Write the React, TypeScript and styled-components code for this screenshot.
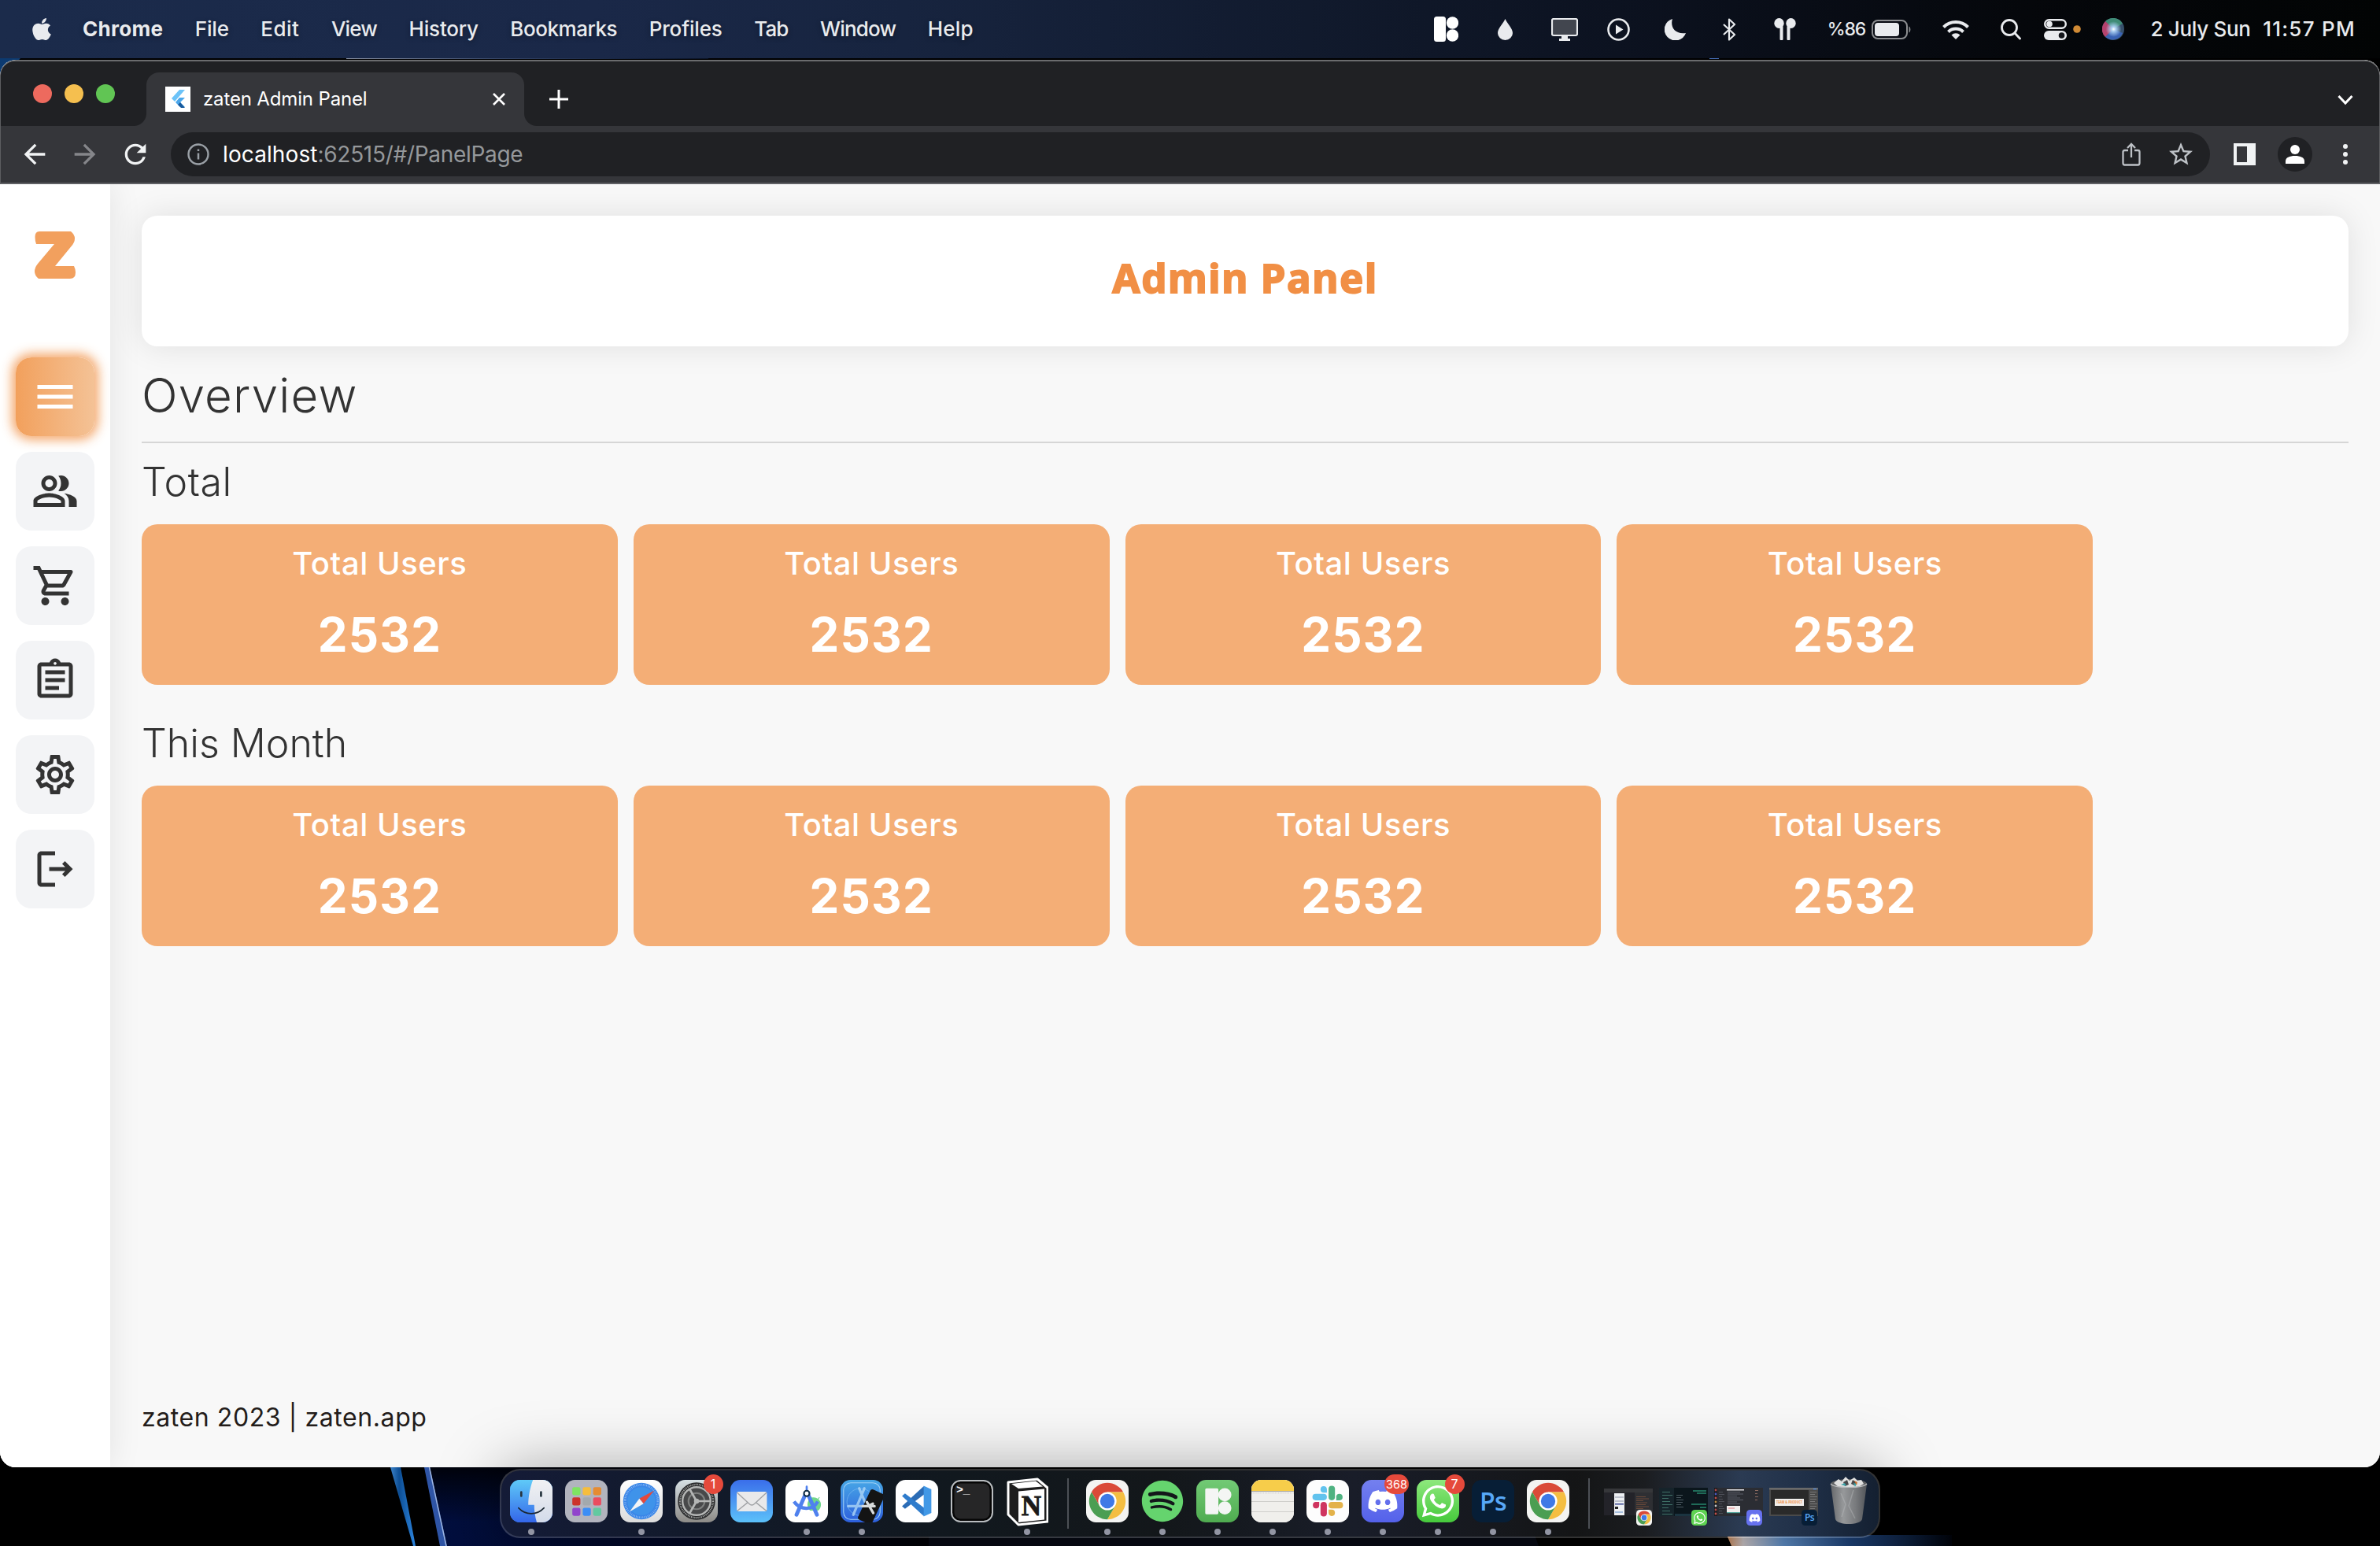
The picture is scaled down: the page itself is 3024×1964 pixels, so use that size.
import React from "react";
import styled, { createGlobalStyle, css } from "styled-components";
import { FaApple, FaDiscord, FaSpotify, FaWhatsapp } from "react-icons/fa";
import { MdArrowBack, MdArrowForward, MdMenu, MdOutlineAssignment, MdOutlinePeopleAlt, MdOutlineSettings, MdOutlineShoppingCart, MdRefresh, MdStarBorder } from "react-icons/md";

const GlobalStyle = createGlobalStyle`
  *, *::before, *::after { box-sizing: border-box; }
  html, body { margin: 0; padding: 0; background: #000; }
  body { font-family: Inter, "Liberation Sans", sans-serif; }
  svg { display: block; flex: none; }
`;

/* ---------- desktop ---------- */
const Desktop = styled.div`
  position: relative;
  width: 3024px;
  height: 1964px;
  overflow: hidden;
  background: #000;
  display: flex;
  flex-direction: column;
`;
const WallpaperLayer = styled.svg`
  position: absolute;
  inset: 0;
`;

/* ---------- menu bar ---------- */
const MenuBar = styled.header`
  position: relative;
  height: 74px;
  flex: none;
  display: flex;
  align-items: center;
  justify-content: space-between;
  padding: 0 32px 0 37px;
  color: #e9ebee;
  background: linear-gradient(90deg, #1b2b4b 0%, #1a2848 25%, #17243f 38%, #111a2d 55%, #0c1220 68%, #05070b 85%, #020404 100%);
`;
const MenuGroup = styled.nav`
  display: flex;
  align-items: center;
  gap: 40.5px;
`;
const MenuItem = styled.span<{ $bold?: boolean; $track?: number }>`
  font-size: 26px;
  line-height: 32px;
  padding-bottom: 1px;
  margin-left: ${(p) => (p.$bold ? -4.5 : 0)}px;
  font-weight: ${(p) => (p.$bold ? 700 : 450)};
  letter-spacing: ${(p) => p.$track ?? 0}px;
  white-space: pre;
  text-shadow: 0 2px 6px rgba(0, 0, 0, 0.35);
`;
const StatusGroup = styled.div`
  display: flex;
  align-items: center;
`;
const StatusItem = styled.span<{ $w: number; $before: number }>`
  display: flex;
  justify-content: center;
  width: ${(p) => p.$w}px;
  margin-left: ${(p) => p.$before}px;
`;
const StatusText = styled.span<{ $size: number; $track: number }>`
  font-size: ${(p) => p.$size}px;
  line-height: 32px;
  font-weight: 450;
  letter-spacing: ${(p) => p.$track}px;
  white-space: pre;
  padding-bottom: 1px;
`;

/* ---------- browser window ---------- */
const BrowserWindow = styled.main`
  position: relative;
  margin-top: 2px;
  height: 1788px;
  flex: none;
  border-radius: 20px;
  overflow: hidden;
  display: flex;
  flex-direction: column;
  background: #f8f8f8;
`;
const BrowserChrome = styled.div`
  height: 158px;
  flex: none;
  border: 1px solid #5c5d60;
  border-top: 2px solid #6b6c6e;
  border-bottom: 2px solid #5f6064;
  border-radius: 20px 20px 0 0;
  background: #35363a;
  display: flex;
  flex-direction: column;
`;
const TabStrip = styled.div`
  height: 82px;
  flex: none;
  display: flex;
  align-items: flex-end;
  background: #202124;
  border-radius: 18px 18px 0 0;
  padding-right: 33px;
`;
const TrafficLights = styled.div`
  display: flex;
  gap: 16px;
  margin-left: 41px;
  padding-bottom: 29px;
`;
const TrafficLight = styled.span<{ $color: string }>`
  width: 24px;
  height: 24px;
  border-radius: 50%;
  background: ${(p) => p.$color};
`;
const Tab = styled.div`
  position: relative;
  display: flex;
  align-items: center;
  width: 480px;
  height: 68px;
  margin-left: 40px;
  padding: 0 23px 0 24px;
  border-radius: 16px 16px 0 0;
  background: #35363a;
  &::before,
  &::after {
    content: "";
    position: absolute;
    bottom: 0;
    width: 16px;
    height: 16px;
  }
  &::before {
    left: -16px;
    background: radial-gradient(circle at 0 0, transparent 15.5px, #35363a 16.5px);
  }
  &::after {
    right: -16px;
    background: radial-gradient(circle at 100% 0, transparent 15.5px, #35363a 16.5px);
  }
`;
const TabTitle = styled.span`
  flex: 1;
  margin-left: 16px;
  font-size: 24px;
  line-height: 30px;
  padding-bottom: 1px;
  letter-spacing: -0.15px;
  color: #fff;
  white-space: nowrap;
`;
const NewTab = styled.span`
  margin-left: 32px;
  padding-bottom: 22px;
`;
const TabSearch = styled.span`
  margin-left: auto;
  padding-bottom: 26px;
`;
const Toolbar = styled.div`
  flex: 1;
  display: flex;
  align-items: center;
  padding-right: 39px;
  color: #f1f3f4;
`;
const NavButton = styled.span<{ $dim?: boolean; $before: number }>`
  display: flex;
  margin-left: ${(p) => p.$before}px;
  color: ${(p) => (p.$dim ? "#85868a" : "#f1f3f4")};
`;
const Omnibox = styled.div`
  flex: 1;
  height: 56px;
  margin-left: 25px;
  padding: 0 19px 0 21px;
  border-radius: 28px;
  background: #202124;
  display: flex;
  align-items: center;
  color: #bdc1c6;
`;
const Url = styled.span`
  flex: 1;
  margin-left: 17px;
  font-size: 28px;
  line-height: 36px;
  letter-spacing: -0.3px;
  color: #95989b;
  white-space: nowrap;
`;
const UrlHost = styled.span`
  letter-spacing: 0.1px;
  color: #fff;
`;
const Avatar = styled.span`
  width: 44px;
  height: 44px;
  margin-left: 28px;
  border-radius: 50%;
  background: #202124;
  display: flex;
  align-items: center;
  justify-content: center;
`;

/* ---------- admin page ---------- */
const Page = styled.div`
  flex: 1;
  display: flex;
  background: #f8f8f8;
  overflow: hidden;
`;
const Sidebar = styled.aside`
  width: 140px;
  flex: none;
  display: flex;
  flex-direction: column;
  align-items: center;
  gap: 20px;
  padding-top: 60px;
  background: #fff;
  box-shadow: 0 0 40px rgba(0, 0, 0, 0.09);
`;
const BrandMark = styled.div`
  height: 60px;
  margin-bottom: 80px;
`;
const SideButton = styled.button<{ $active?: boolean }>`
  width: 100px;
  height: 100px;
  flex: none;
  padding: 0;
  border: 0;
  border-radius: 20px;
  display: flex;
  align-items: center;
  justify-content: center;
  font-size: 60px;
  color: #333;
  background: #f3f4f6;
  ${(p) =>
    p.$active &&
    css`
      color: #fff;
      background: linear-gradient(90deg, #f2a05c, #f4c296);
      box-shadow: 0 0 14px 5px rgba(243, 160, 94, 0.9);
    `}
`;
const Content = styled.section`
  flex: 1;
  display: flex;
  flex-direction: column;
  padding: 40px 40px 43px;
`;
const TitleCard = styled.div`
  height: 166px;
  flex: none;
  display: flex;
  align-items: center;
  justify-content: center;
  padding-bottom: 10px;
  border-radius: 20px;
  background: #fff;
  box-shadow: 0 0 40px rgba(0, 0, 0, 0.1);
`;
const Title = styled.h1`
  margin: 0;
  font-family: "Noto Sans", "Open Sans", sans-serif;
  font-size: 51px;
  font-weight: 700;
  line-height: 72px;
  letter-spacing: 1.6px;
  color: #f18f45;
  -webkit-text-stroke: 1.8px #f18f45;
`;
const Heading = styled.h2`
  margin: 20px 0 17px;
  font-size: 60px;
  font-weight: 300;
  line-height: 84px;
  letter-spacing: 1.2px;
  font-optical-sizing: none;
  color: #333;
`;
const Rule = styled.hr`
  width: 100%;
  height: 2px;
  flex: none;
  margin: 0 0 19px;
  border: 0;
  background: #d6d6d6;
`;
const SubHeading = styled.h3<{ $track?: number }>`
  margin: 0 0 24px;
  font-size: 50px;
  font-weight: 300;
  line-height: 60px;
  letter-spacing: ${(p) => p.$track ?? 0}px;
  font-optical-sizing: none;
  color: #333;
`;
const CardGrid = styled.div`
  display: grid;
  grid-template-columns: repeat(4, 604.8px);
  gap: 20px;
  margin-bottom: 44px;
`;
const StatCard = styled.article`
  height: 204px;
  padding-top: 20px;
  display: flex;
  flex-direction: column;
  align-items: center;
  gap: 20px;
  border-radius: 20px;
  background: #f4ae76;
  color: #fff;
`;
const StatLabel = styled.span`
  font-size: 40px;
  font-weight: 500;
  line-height: 60px;
  letter-spacing: 0.55px;
  font-optical-sizing: none;
`;
const StatValue = styled.span`
  font-size: 60px;
  font-weight: 700;
  line-height: 80px;
  letter-spacing: 1.2px;
  font-optical-sizing: none;
`;
const Footer = styled.footer`
  margin-top: auto;
  font-size: 32px;
  line-height: 40px;
  letter-spacing: 0.58px;
  font-optical-sizing: none;
  color: #231c1a;
`;

/* ---------- dock ---------- */
const DockArea = styled.div`
  position: relative;
  flex: 1;
  display: flex;
  justify-content: center;
  align-items: flex-start;
  padding-top: 2px;
`;
const Dock = styled.div`
  display: flex;
  height: 88px;
  padding: 0 3px;
  border-radius: 26px;
  border: 2px solid rgba(255, 255, 255, 0.2);
  background: linear-gradient(90deg, #141b37 0%, #121a2a 15%, #11181e 33%, #13171a 48%, #191d29 62%, #141516 78%, #1b1d20 83%, #2b3b53 90%, #1f2f47 95%, #142031 100%);
  background-clip: padding-box;
  background-color: #14181f;
  box-shadow: 0 0 80px rgba(0, 0, 0, 0.35);
`;
const DockCell = styled.div`
  position: relative;
  width: 70px;
  padding-top: 12px;
  display: flex;
  flex-direction: column;
  align-items: center;
`;
const RunningDot = styled.span`
  width: 8px;
  height: 8px;
  margin-top: 8px;
  border-radius: 50%;
  background: #9295a3;
`;
const AppBadge = styled.span<{ $wide?: boolean }>`
  position: absolute;
  top: 5px;
  right: ${(p) => (p.$wide ? 2 : 1.5)}px;
  width: ${(p) => (p.$wide ? 31 : 25)}px;
  height: 25px;
  border-radius: 13px;
  background: #e5493b;
  color: #fff;
  font-size: ${(p) => (p.$wide ? 14.5 : 16)}px;
  line-height: 25px;
  text-align: center;
`;
const AppTile = styled.span<{ $bg: string; $size?: number; $color?: string }>`
  width: ${(p) => p.$size ?? 54}px;
  height: ${(p) => p.$size ?? 54}px;
  border-radius: ${(p) => (p.$size ?? 54) * 0.23}px;
  background: ${(p) => p.$bg};
  color: ${(p) => p.$color ?? "#fff"};
  overflow: hidden;
  display: flex;
  align-items: center;
  justify-content: center;
  flex: none;
`;
const PsText = styled.span<{ $size: number }>`
  font-family: "Open Sans", sans-serif;
  font-weight: 600;
  font-size: ${(p) => p.$size}px;
  line-height: 1;
  letter-spacing: -0.5px;
  color: #57a8f8;
`;
const PromptText = styled.span`
  align-self: flex-start;
  margin-right: auto;
  padding: 3px 0 0 5px;
  font: 700 15px/17px "Liberation Mono", monospace;
  letter-spacing: -0.5px;
  color: #f2f2f2;
`;
const TerminalTile = styled(AppTile)`
  border: 2.5px solid #b9bdc0;
  box-shadow: inset 0 0 0 2.5px #050505;
`;
const DockDivider = styled.span`
  width: 2px;
  height: 64px;
  margin: 10px 14px 0 16px;
  background: #4c5055;
`;
const MiniWindow = styled.div`
  position: relative;
  margin-top: 10px;
  width: 62px;
  height: 36px;
`;
const MiniBadge = styled.span`
  position: absolute;
  right: 1px;
  bottom: -12px;
`;

/* ---------- icons ---------- */
const rainbow = ["#7fe561", "#f6bd3c", "#e58c33", "#cc332a", "#a2a9ad", "#ea4c5f", "#9144cc", "#3c8ef5", "#62c9a0"];

const FinderIcon = () => (
  <svg width="54" height="54" viewBox="0 0 100 100">
    <defs>
      <linearGradient id="finderBlue" x1="0" y1="0" x2="0" y2="1"><stop offset="0" stopColor="#5fcaf8" /><stop offset="1" stopColor="#3466ea" /></linearGradient>
      <linearGradient id="finderWhite" x1="0" y1="0" x2="0" y2="1"><stop offset="0" stopColor="#f1f1f3" /><stop offset="1" stopColor="#d3dbea" /></linearGradient>
    </defs>
    <rect width="100" height="100" fill="url(#finderBlue)" />
    <path d="M54 0C47 18 43 40 43 59h14c0 14 2 28 6 41h37V0z" fill="url(#finderWhite)" />
    <path d="M26.500 29v9M73 29v9" stroke="#26343f" strokeWidth="5" strokeLinecap="round" />
    <path d="M20 66c17 18 43 18 60 0" fill="none" stroke="#1b2733" strokeWidth="3" strokeLinecap="round" />
  </svg>
);
const LaunchpadIcon = () => (
  <svg width="54" height="54" viewBox="0 0 100 100">
    {rainbow.map((c, i) => <rect key={c} x={17 + (i % 3) * 24.500} y={17 + Math.floor(i / 3) * 24.300} width="19" height="19" rx="4" fill={c} />)}
  </svg>
);
const SafariIcon = () => (
  <svg width="54" height="54" viewBox="0 0 100 100">
    <circle cx="50" cy="50" r="43" fill="#3a86e8" />
    <circle cx="50" cy="50" r="38.500" fill="none" stroke="#b5d4f7" strokeWidth="5" strokeDasharray="1 3" />
    <circle cx="50" cy="50" r="33" fill="#3f93ea" />
    <path d="M80 25 45 44l10 12z" fill="#e5493c" />
    <path d="M22 75 45 44l10 12z" fill="#f3f4f5" />
  </svg>
);
const SettingsIcon = () => (
  <svg width="54" height="54" viewBox="0 0 100 100">
    <circle cx="50" cy="50" r="44" fill="#2b2c2d" />
    <circle cx="50" cy="50" r="39" fill="none" stroke="#a7a9a8" strokeWidth="4" strokeDasharray="2 2" />
    <circle cx="50" cy="50" r="33" fill="#48494a" stroke="#b4b6b5" strokeWidth="4.500" />
    <circle cx="50" cy="50" r="19" fill="none" stroke="#7e807f" strokeWidth="4" />
    <path d="M50 50h32M50 50 34 22M50 50 34 78" stroke="#b4b6b5" strokeWidth="5" />
    <circle cx="50" cy="50" r="6" fill="#b4b6b5" />
  </svg>
);
const MailIcon = () => (
  <svg width="54" height="54" viewBox="0 0 100 100">
    <rect x="15" y="28" width="71" height="46" rx="4" fill="#e9e9ea" />
    <path d="M16 30l28 26c4 4 9 4 13 0l28-26M16 73l25-20M85 73 60 53" fill="none" stroke="#a0a2a5" strokeWidth="2.500" />
  </svg>
);
const AndroidStudioIcon = () => (
  <svg width="54" height="54" viewBox="0 0 100 100">
    <path d="M58 72a19 19 0 0 1 0-28c10-7 22 0 25 10 2 8-2 15-6 18z" fill="#70d68c" />
    <path d="M63 45l-3-5M76 46l4-5" stroke="#70d68c" strokeWidth="2" />
    <path d="M50 16v14" stroke="#4f81ee" strokeWidth="5" strokeLinecap="round" />
    <path d="M46 36 26 82M54 36l20 46" stroke="#4f81ee" strokeWidth="9" strokeLinecap="round" />
    <path d="M20 51c14 20 44 22 56 0" fill="none" stroke="#4f81ee" strokeWidth="8" />
    <circle cx="50" cy="32" r="6.500" fill="#fff" stroke="#12304a" strokeWidth="4" />
  </svg>
);
const SimulatorIcon = () => (
  <svg width="54" height="54" viewBox="0 0 100 100">
    <rect x="7" y="7" width="86" height="86" rx="17" fill="none" stroke="#9fd0f5" strokeWidth="2" />
    <circle cx="47" cy="52" r="32" fill="none" stroke="#6fb4ef" strokeWidth="1.500" />
    <path d="M56 20 30 82M44 20l26 62M18 62h60" fill="none" stroke="#b5dbf8" strokeWidth="6" strokeLinecap="round" opacity=".75" />
    <g transform="rotate(25 73 64)"><rect x="54" y="25" width="36" height="78" rx="5" fill="#141414" /></g>
    <path d="M62 52l15 26M52 62h28M76 56l-8 4" stroke="#d8dadc" strokeWidth="6" strokeLinecap="round" />
  </svg>
);
const CodeIcon = () => (
  <svg width="54" height="54" viewBox="0 0 100 100">
    <path d="M66 15 15 62l7 6 48-36z" fill="#2b6cb5" />
    <path d="M15 38 66 85l4-17-48-36z" fill="#2f7ccc" />
    <path d="M66 14l18 8v56l-18 8z" fill="#4198e6" />
  </svg>
);
const NotionIcon = () => (
  <svg width="54" height="64" viewBox="0 0 54 64">
    <path d="M3 8 40 4l13 11v43l-37 4L3 49z" fill="#1d1d1d" stroke="#fff" strokeWidth="3" strokeLinejoin="round" />
    <path d="M7 10l31-3.500 9 7L16 16z" fill="#fff" />
    <path d="M16 19.500l33-3v39l-33 3.500z" fill="#fff" />
    <text x="32.500" y="50" textAnchor="middle" fontFamily="Liberation Serif, serif" fontWeight="700" fontSize="35" fill="#1a1a1a" stroke="#1a1a1a" strokeWidth=".8">N</text>
  </svg>
);
const ChromeIcon = ({ size }: { size: number }) => (
  <svg width={size} height={size} viewBox="0 0 100 100">
    <path d="M12.800 28.500A43 43 0 0 1 87.200 28.500H50L50 50 31.400 60.750z" fill="#da4a38" />
    <path d="M87.200 28.500A43 43 0 0 1 50 93l18.600-32.250L50 50V28.500z" fill="#f4be42" />
    <path d="M50 93A43 43 0 0 1 12.800 28.500L31.400 60.750 50 50l18.600 10.750z" fill="#4b9e52" />
    <circle cx="50" cy="50" r="21.500" fill="#fff" />
    <circle cx="50" cy="50" r="17" fill="#3f79e6" />
  </svg>
);
const BlocksIcon = () => (
  <svg width="54" height="54" viewBox="0 0 100 100" fill="#f4f5f4">
    <rect x="21" y="20" width="31" height="61" rx="3" />
    <circle cx="67" cy="35" r="15.500" />
    <circle cx="67" cy="66" r="15.500" />
  </svg>
);
const NotesIcon = () => (
  <svg width="54" height="54" viewBox="0 0 100 100">
    <rect width="100" height="100" fill="#f0efec" />
    <rect width="100" height="26" fill="#f7cd4a" />
    <path d="M0 27h100" stroke="#a9a7a0" strokeWidth="2" />
    <path d="M0 31h100" stroke="#b5b4b0" strokeWidth="1.500" strokeDasharray="1.500 2" />
    <path d="M0 51h100M0 75h100" stroke="#cfcecb" strokeWidth="2" />
  </svg>
);
const SlackIcon = () => (
  <svg width="54" height="54" viewBox="0 0 100 100">
    <g fill="#62c3ee"><rect x="14" y="33" width="34" height="15" rx="7.500" /><path d="M48 30h-7.500a7.500 7.500 0 1 1 7.500-8z" /></g>
    <g fill="#4fb281"><rect x="52" y="14" width="15" height="34" rx="7.500" /><path d="M70 48v-7.500a7.500 7.500 0 1 1 8 7.500z" /></g>
    <g fill="#e3b24a"><rect x="52" y="52" width="34" height="15" rx="7.500" /><path d="M52 70h7.500a7.500 7.500 0 1 1-7.500 8z" /></g>
    <g fill="#cf3560"><rect x="33" y="52" width="15" height="34" rx="7.500" /><path d="M30 52v7.500a7.500 7.500 0 1 1-8-7.500z" /></g>
  </svg>
);
const TrashIcon = () => (
  <svg width="48" height="62" viewBox="0 0 48 62">
    <defs><linearGradient id="bin" x1="0" x2="1" y1="0" y2="0"><stop offset="0" stopColor="#66686b" /><stop offset=".35" stopColor="#96989a" /><stop offset=".7" stopColor="#77797c" /><stop offset="1" stopColor="#525559" /></linearGradient></defs>
    <ellipse cx="24" cy="10" rx="23" ry="6" fill="#5d5f62" />
    <path d="M5 9l6-5 4 3 5-6 5 5 6-4 4 4 5-1 3 5-8 5H12z" fill="#dfe0e0" />
    <path d="M17 8l5-3 2 6-5 2zM29 5l5 3-3 4-4-2z" fill="#4a4a4c" />
    <path d="M14 11l5-2 2 4zM30 9l4 1-2 4z" fill="#3ba3a8" />
    <path d="M31 6l4 2-1 4z" fill="#d0722f" />
    <path d="M1 10c5 6 41 6 46 0l-6 45c-3 8-31 8-34 0z" fill="url(#bin)" />
    <path d="M1 10c5 6 41 6 46 0" fill="none" stroke="#b9bbbd" strokeWidth="1.200" />
    <path d="M14 22l6 14-5 16M30 18l-6 20 8 16" fill="none" stroke="#bcbec0" strokeWidth="1.500" opacity=".4" />
  </svg>
);

const LogoutIcon = () => (
  <svg width="60" height="60" viewBox="0 0 24 24" fill="currentColor">
    <path d="M17 8l-1.410 1.410L17.170 11H9v2h8.170l-1.580 1.580L17 16l4-4zM5 5h7V3H5c-1.100 0-2 .9-2 2v14c0 1.100.9 2 2 2h7v-2H5z" />
  </svg>
);
const BrandIcon = () => (
  <svg width="52" height="60" viewBox="0 0 52 60">
    <path d="M6 0H46Q51 4 51 9 51 14 46.500 19L26 44H50Q52 48 52 52 52 60 45 60H5Q0 56 0 51 0 46 4 41L25 16H2Q0.500 12 0.500 7 .5 0 6 0z" fill="#f2a05e" />
  </svg>
);

const FlutterFavicon = () => (
  <svg width="32" height="32" viewBox="0 0 32 32">
    <rect width="32" height="32" fill="#fff" />
    <path d="M18 4h7L12 19l-4-4z" fill="#6cc3f8" />
    <path d="M18 14h7l-6 6 6 6h-6l-6-6z" fill="#4aa6ea" />
    <path d="M16 23l3-3 6 7h-5z" fill="#17599c" />
  </svg>
);

const StatusIcons = () => (
  <StatusGroup>
    <StatusItem $w={31} $before={0}>
      <svg width="31" height="32" viewBox="0 0 31 32" fill="#fff"><rect width="15" height="32" rx="3.500" /><circle cx="23.500" cy="8" r="7.700" /><circle cx="23.500" cy="24" r="7.700" /></svg>
    </StatusItem>
    <StatusItem $w={19} $before={50}>
      <svg width="19" height="27" viewBox="0 0 19 27" fill="currentColor"><path d="M9.500 0C12 6 19 12 19 18a9.500 9 0 0 1-19 0C0 12 7 6 9.500 0z" /></svg>
    </StatusItem>
    <StatusItem $w={34} $before={49}>
      <svg width="34" height="29" viewBox="0 0 34 29"><rect x="1" y="1" width="32" height="21" rx="2" fill="#42464f" stroke="currentColor" strokeWidth="2.200" /><path d="M13 23h8v3h3v3H10v-3h3z" fill="currentColor" /></svg>
    </StatusItem>
    <StatusItem $w={29} $before={37}>
      <svg width="29" height="29" viewBox="0 0 29 29"><circle cx="14.500" cy="14.500" r="13" fill="none" stroke="currentColor" strokeWidth="2.600" /><path d="M11 8.500v12l9.500-6z" fill="currentColor" /></svg>
    </StatusItem>
    <StatusItem $w={27} $before={44}>
      <svg width="27" height="27" viewBox="0 0 27 27" fill="currentColor"><path d="M10 0C7 9 12 20 27 18A14 14 0 1 1 10 0z" /></svg>
    </StatusItem>
    <StatusItem $w={17} $before={47}>
      <svg width="17" height="29" viewBox="0 0 17 29" fill="none" stroke="currentColor" strokeWidth="2.200" strokeLinejoin="round"><path d="M1 8l14 13-7 6.500V1.500L15 8 1 21" /></svg>
    </StatusItem>
    <StatusItem $w={28} $before={48}>
      <svg width="28" height="29" viewBox="0 0 28 29" fill="currentColor"><ellipse cx="6.500" cy="6.500" rx="6.200" ry="6.500" /><ellipse cx="21.500" cy="6.500" rx="6.200" ry="6.500" /><rect x="7.500" y="10" width="4" height="18" rx="1" /><rect x="16.500" y="10" width="4" height="18" rx="1" /></svg>
    </StatusItem>
    <StatusItem $w={48} $before={40}><StatusText $size={23} $track={-1.1}>%86</StatusText></StatusItem>
    <StatusItem $w={50} $before={8}>
      <svg width="50" height="25" viewBox="0 0 50 25"><rect x="1" y="1" width="44" height="23" rx="7" fill="none" stroke="#8b8d90" strokeWidth="2" /><rect x="4" y="4" width="31" height="17" rx="4" fill="currentColor" /><path d="M47.500 8.500c2.500 1 2.500 7 0 8z" fill="#8b8d90" /></svg>
    </StatusItem>
    <StatusItem $w={34} $before={40}>
      <svg width="34" height="25" viewBox="0 0 34 25" fill="none" stroke="currentColor" strokeWidth="4"><path d="M1.500 9.500a22 22 0 0 1 31 0" /><path d="M7.500 15.500a13.500 13.500 0 0 1 19 0" /><path d="M11.500 19.500a7.800 7.800 0 0 1 11 0L17 25z" fill="currentColor" stroke="none" /></svg>
    </StatusItem>
    <StatusItem $w={26} $before={40}>
      <svg width="26" height="27" viewBox="0 0 26 27" fill="none" stroke="currentColor" strokeWidth="2.800" strokeLinecap="round"><circle cx="11" cy="11" r="9.500" /><path d="M18 18l6.500 7" /></svg>
    </StatusItem>
    <StatusItem $w={29} $before={29}>
      <svg width="29" height="27" viewBox="0 0 29 27"><rect x="1.200" y="1.200" width="26.600" height="10.600" rx="5.300" fill="none" stroke="currentColor" strokeWidth="2.400" /><circle cx="7" cy="6.500" r="3.800" fill="currentColor" /><rect y="15" width="29" height="12" rx="6" fill="currentColor" /><circle cx="22.500" cy="21" r="3.800" fill="#14161b" /></svg>
    </StatusItem>
    <StatusItem $w={10} $before={8}>
      <svg width="10" height="10" viewBox="0 0 10 10"><circle cx="5" cy="5" r="4.800" fill="#d08a35" /></svg>
    </StatusItem>
    <StatusItem $w={28} $before={27}>
      <svg width="28" height="28" viewBox="0 0 28 28">
        <defs><radialGradient id="siri"><stop offset="0" stopColor="#fff" /><stop offset=".3" stopColor="#a8cdf0" /><stop offset="1" stopColor="#a8cdf0" stopOpacity="0" /></radialGradient></defs>
        <circle cx="14" cy="14" r="14" fill="#37506b" />
        <path d="M14 14 4 4A14 14 0 0 1 26 7z" fill="#3f8b76" /><path d="M14 14 4 4A14 14 0 0 0 4 24z" fill="#b5436e" /><path d="M14 14 4 24a14 14 0 0 0 22-5z" fill="#3a63b4" />
        <circle cx="14.500" cy="14" r="10" fill="url(#siri)" />
      </svg>
    </StatusItem>
    <StatusItem $w={126} $before={34}><StatusText $size={26} $track={-0.3}>2 July Sun</StatusText></StatusItem>
    <StatusItem $w={116} $before={17}><StatusText $size={26} $track={1.25}>11:57 PM</StatusText></StatusItem>
  </StatusGroup>
);

const menus: [string, number][] = [
  ["File", -0.2], ["Edit", 0.5], ["View", -0.8], ["History", -0.2], ["Bookmarks", -0.45],
  ["Profiles", -0.15], ["Tab", -0.9], ["Window", -0.8], ["Help", 0.15],
];

const Wallpaper = () => (
  <WallpaperLayer width="3024" height="1964" viewBox="0 0 3024 1964">
    <defs>
      <linearGradient id="navy" x1="546" x2="1250" y1="0" y2="0" gradientUnits="userSpaceOnUse"><stop offset="0" stopColor="#020f40" /><stop offset=".3" stopColor="#01092b" /><stop offset="1" stopColor="#000" /></linearGradient>
      <linearGradient id="shade" x1="0" x2="0" y1="1864" y2="1964" gradientUnits="userSpaceOnUse"><stop offset="0" stopColor="#000" stopOpacity=".8" /><stop offset=".7" stopColor="#000" stopOpacity="0" /></linearGradient>
      <linearGradient id="planet" x1="2195" x2="2480" y1="0" y2="0" gradientUnits="userSpaceOnUse"><stop offset="0" stopColor="#c98a5c" /><stop offset=".07" stopColor="#c9c2c4" /><stop offset=".25" stopColor="#5d8cc4" /><stop offset=".55" stopColor="#1c3f73" /><stop offset="1" stopColor="#000208" /></linearGradient>
      <linearGradient id="streak" x1="496" x2="528" y1="0" y2="0" gradientUnits="userSpaceOnUse"><stop offset="0" stopColor="#3c83c9" /><stop offset=".35" stopColor="#0d4e94" /><stop offset="1" stopColor="#2d86e0" /></linearGradient>
      <linearGradient id="horizon" x1="440" x2="900" y1="0" y2="0" gradientUnits="userSpaceOnUse"><stop offset="0" stopColor="#8c93a3" /><stop offset=".4" stopColor="#3a4a6b" /><stop offset="1" stopColor="#1c3a78" stopOpacity=".3" /></linearGradient>
    </defs>
    <path d="M546 1864H1250V1964H568z" fill="url(#navy)" />
    <path d="M546 1864H1250V1964H568z" fill="url(#shade)" />
    <path d="M496 1864h13l19 100h-3z" fill="url(#streak)" />
    <path d="M539 1864h7l22 100h-9z" fill="#2f55a6" />
    <path d="M545.500 1864l21.500 100" stroke="#9db5e2" strokeWidth="1.500" />
    <path d="M1180 1950H1950l5 14H1180z" fill="#060913" />
    <path d="M2194 1950H2480V1964H2200z" fill="url(#planet)" />
    <path d="M0 74h26L0 104z" fill="#0c3a70" />
    <rect x="440" y="74" width="460" height="1" fill="url(#horizon)" />
    <rect x="2172" y="74" width="12" height="1" fill="#4a74c0" />
  </WallpaperLayer>
);

const stats = ["first", "second", "third", "fourth"];
const StatRow = () => (
  <CardGrid>
    {stats.map((s) => (
      <StatCard key={s}>
        <StatLabel>Total Users</StatLabel>
        <StatValue>2532</StatValue>
      </StatCard>
    ))}
  </CardGrid>
);

type DockApp = { name: string; icon: React.ReactNode; running?: boolean; badge?: string };
const Tile = AppTile;
const leftApps: DockApp[] = [
  { name: "finder", running: true, icon: <Tile $bg="#3b8ef0"><FinderIcon /></Tile> },
  { name: "launchpad", icon: <Tile $bg="#b2b4be"><LaunchpadIcon /></Tile> },
  { name: "safari", running: true, icon: <Tile $bg="linear-gradient(#fff, #dcdcdc)"><SafariIcon /></Tile> },
  { name: "settings", badge: "1", icon: <Tile $bg="linear-gradient(#d6e0e4, #8d8b87)"><SettingsIcon /></Tile> },
  { name: "mail", icon: <Tile $bg="linear-gradient(#3a6eea, #5cc1fa)"><MailIcon /></Tile> },
  { name: "studio", running: true, icon: <Tile $bg="#fff"><AndroidStudioIcon /></Tile> },
  { name: "simulator", running: true, icon: <Tile $bg="linear-gradient(#47a7e6, #2d5fdc)"><SimulatorIcon /></Tile> },
  { name: "code", icon: <Tile $bg="#fff"><CodeIcon /></Tile> },
  { name: "terminal", icon: <TerminalTile $bg="#262627"><PromptText>&gt;_</PromptText></TerminalTile> },
];
const rightApps: DockApp[] = [
  { name: "chrome", running: true, icon: <Tile $bg="#f4f4f2"><ChromeIcon size={54} /></Tile> },
  { name: "spotify", running: true, icon: <FaSpotify size={54} color="#65d46e" /> },
  { name: "blocks", running: true, icon: <Tile $bg="linear-gradient(#72ca75, #4fab50)"><BlocksIcon /></Tile> },
  { name: "notes", running: true, icon: <Tile $bg="#f0efec"><NotesIcon /></Tile> },
  { name: "slack", running: true, icon: <Tile $bg="#fdfdfd"><SlackIcon /></Tile> },
  { name: "discord", running: true, badge: "368", icon: <Tile $bg="linear-gradient(#7480ef, #5461ea)"><FaDiscord size={40} /></Tile> },
  { name: "whatsapp", running: true, badge: "7", icon: <Tile $bg="linear-gradient(#8ee87d, #46c93c)"><FaWhatsapp size={46} /></Tile> },
  { name: "photoshop", running: true, icon: <Tile $bg="#071e36"><PsText $size={32}>Ps</PsText></Tile> },
  { name: "chrome-dev", running: true, icon: <Tile $bg="#f4f4f2"><ChromeIcon size={54} /></Tile> },
];

const DockItem = ({ app }: { app: DockApp }) => (
  <DockCell>
    {app.icon}
    {app.running && <RunningDot />}
    {app.badge && <AppBadge $wide={app.badge.length > 1}>{app.badge}</AppBadge>}
  </DockCell>
);
const TallCell = styled(DockCell)`
  padding-top: 7px;
  & > ${RunningDot} { margin-top: 3px; }
`;

const lines = (x: number, y0: number, step: number, n: number, color: string, w: number[]) =>
  Array.from({ length: n }, (_, i) => <rect key={i} x={x} y={y0 + i * step} width={w[i % w.length]} height="1" fill={color} />);

const BrowserMini = () => (
  <svg width="62" height="36" viewBox="0 0 62 36">
    <rect y="1" width="62" height="34" fill="#232329" /><rect y="1" width="62" height="5" fill="#36373a" />
    <rect x="39" y="6" width="23" height="29" fill="#2e2f33" />{lines(41, 11, 2.5, 7, "#6c4a3a", [12, 16, 9, 14])}
    <rect x="13" y="7" width="13" height="28" fill="#eef0f3" /><path d="M14 12h11M14 17h11" stroke="#8c93a8" /><rect x="14" y="20" width="11" height="1.500" fill="#35428f" /><rect x="14" y="24" width="4" height="3" fill="#222" /><path d="M14 31h10" stroke="#5b8cc9" />
  </svg>
);
const ChatMini = () => (
  <svg width="62" height="36" viewBox="0 0 62 36">
    <rect width="62" height="36" fill="#0b161c" /><rect width="19" height="36" fill="#16242b" />{lines(4, 5, 4, 8, "#3f6f66", [10, 13, 8])}
    <rect x="20" y="33" width="42" height="3" fill="#1b3440" />{lines(22, 9, 3, 6, "#4b5960", [8, 6, 9])}
    <rect x="43" y="3" width="17" height="2" fill="#1f6b58" /><rect x="48" y="6" width="12" height="2" fill="#1f6b58" /><rect x="41" y="20" width="19" height="2" fill="#1f6b58" /><rect x="52" y="24" width="8" height="2" fill="#1f6b58" />
  </svg>
);
const ServerMini = () => (
  <svg width="62" height="36" viewBox="0 0 62 36">
    <rect width="62" height="36" fill="#2b2d33" /><rect width="4" height="36" fill="#1a1b1f" />
    {["#b14a4a", "#4a5ac0", "#c0504a", "#b98a42", "#c9c9c9", "#b14a4a", "#c0504a"].map((c, i) => <circle key={i} cx="2" cy={3 + i * 5} r="1.400" fill={c} />)}
    {lines(6, 5, 3, 10, "#4c4f57", [5, 7, 4])}{lines(17, 5, 2.500, 7, "#5a5e69", [16, 20, 12])}
    <rect x="16" y="2" width="22" height="1.500" fill="#e4e4e6" /><rect x="16" y="23" width="17" height="9" fill="#f1efee" /><path d="M18 26h8" stroke="#e07b80" /><rect x="16" y="31" width="17" height="1.200" fill="#4fa39a" />{lines(52, 3, 4, 4, "#8a6a60", [4, 3])}
  </svg>
);
const EditorMini = () => (
  <svg width="62" height="36" viewBox="0 0 62 36">
    <rect width="62" height="36" fill="#4a4a4a" /><rect x="2" y="3" width="48" height="31" fill="#2a2a2a" /><rect width="62" height="2.500" fill="#6a6a6a" />
    {lines(52, 5, 3, 8, "#777", [8, 6, 9])}<rect x="56" y="1" width="4" height="1.200" fill="#4b8dea" />
    <rect x="7" y="14" width="37" height="9" fill="#f1efec" />
    <text x="25.500" y="20.200" textAnchor="middle" fontFamily="Open Sans, sans-serif" fontWeight="800" fontSize="4.600" textLength="33" lengthAdjust="spacingAndGlyphs" fill="#efa36b">TEAM &amp; PRODUCT</text>
  </svg>
);
const minis = [
  { name: "browser", view: <BrowserMini />, badge: <Tile $size={20} $bg="#f4f4f2"><ChromeIcon size={20} /></Tile> },
  { name: "chat", view: <ChatMini />, badge: <Tile $size={20} $bg="#5fd352"><FaWhatsapp size={17} /></Tile> },
  { name: "server", view: <ServerMini />, badge: <Tile $size={20} $bg="#6671ee"><FaDiscord size={15} /></Tile> },
  { name: "editor", view: <EditorMini />, badge: <Tile $size={20} $bg="#071e36"><PsText $size={12}>Ps</PsText></Tile> },
];

export default function App() {
  return (
    <Desktop>
      <GlobalStyle />
      <Wallpaper />
      <MenuBar>
        <MenuGroup>
          <FaApple size={32} />
          <MenuItem $bold $track={0.3}>Chrome</MenuItem>
          {menus.map(([label, track]) => <MenuItem key={label} $track={track}>{label}</MenuItem>)}
        </MenuGroup>
        <StatusIcons />
      </MenuBar>

      <BrowserWindow>
        <BrowserChrome>
          <TabStrip>
            <TrafficLights>
              <TrafficLight $color="#ed6a5e" />
              <TrafficLight $color="#f5bf4f" />
              <TrafficLight $color="#61c554" />
            </TrafficLights>
            <Tab>
              <FlutterFavicon />
              <TabTitle>zaten Admin Panel</TabTitle>
              <svg width="18" height="18" viewBox="0 0 18 18"><path d="M2 2l14 14M16 2 2 16" stroke="#fff" strokeWidth="2.600" /></svg>
            </Tab>
            <NewTab><svg width="24" height="24" viewBox="0 0 24 24"><path d="M12 0v24M0 12h24" stroke="#fff" strokeWidth="3" /></svg></NewTab>
            <TabSearch><svg width="20" height="14" viewBox="0 0 20 14"><path d="M1.500 2l8.500 9 8.500-9" fill="none" stroke="#fff" strokeWidth="3" /></svg></TabSearch>
          </TabStrip>
          <Toolbar>
            <NavButton $before={23}><MdArrowBack size={40} /></NavButton>
            <NavButton $before={24} $dim><MdArrowForward size={40} /></NavButton>
            <NavButton $before={24}><MdRefresh size={40} /></NavButton>
            <Omnibox>
              <svg width="28" height="28" viewBox="0 0 28 28"><circle cx="14" cy="14" r="12.500" fill="none" stroke="#9aa0a6" strokeWidth="2.400" /><path d="M14 12.500v8M14 7.500v2.600" stroke="#9aa0a6" strokeWidth="2.500" /></svg>
              <Url><UrlHost>localhost</UrlHost>:62515/#/PanelPage</Url>
              <svg width="24" height="30" viewBox="0 0 24 30" fill="none" stroke="#bdc1c6" strokeWidth="2.300"><path d="M8 10H3.500Q1.500 10 1.500 12V26q0 2.500 2 2.500h17q2 0 2-2.500V12q0-2-2-2H16M12 19V2M7 7l5-5 5 5" /></svg>
              <NavButton $before={33}><MdStarBorder size={36} color="#bdc1c6" /></NavButton>
            </Omnibox>
            <NavButton $before={30}>
              <svg width="28" height="28" viewBox="0 0 28 28"><path d="M0 0h28v28H0z" fill="#f1f3f4" /><path d="M4 4h13v20H4z" fill="#35363a" /></svg>
            </NavButton>
            <Avatar><svg width="24" height="24" viewBox="0 0 24 24" fill="#fff"><circle cx="12" cy="6" r="6" /><path d="M0 24v-3c0-5 5-7 12-7s12 2 12 7v3z" /></svg></Avatar>
            <NavButton $before={38}><svg width="8" height="28" viewBox="0 0 8 28" fill="#f1f3f4"><circle cx="4" cy="4" r="3" /><circle cx="4" cy="14" r="3" /><circle cx="4" cy="24" r="3" /></svg></NavButton>
          </Toolbar>
        </BrowserChrome>

        <Page>
          <Sidebar>
            <BrandMark><BrandIcon /></BrandMark>
            <SideButton $active><MdMenu /></SideButton>
            <SideButton><MdOutlinePeopleAlt /></SideButton>
            <SideButton><MdOutlineShoppingCart /></SideButton>
            <SideButton><MdOutlineAssignment /></SideButton>
            <SideButton><MdOutlineSettings /></SideButton>
            <SideButton><LogoutIcon /></SideButton>
          </Sidebar>
          <Content>
            <TitleCard><Title>Admin Panel</Title></TitleCard>
            <Heading>Overview</Heading>
            <Rule />
            <SubHeading $track={0.6}>Total</SubHeading>
            <StatRow />
            <SubHeading>This Month</SubHeading>
            <StatRow />
            <Footer>zaten 2023 | zaten.app</Footer>
          </Content>
        </Page>
      </BrowserWindow>

      <DockArea>
        <Dock>
          {leftApps.map((a) => <DockItem key={a.name} app={a} />)}
          <TallCell><NotionIcon /><RunningDot /></TallCell>
          <DockDivider />
          {rightApps.map((a) => <DockItem key={a.name} app={a} />)}
          <DockDivider />
          {minis.map((m) => (
            <DockCell key={m.name}>
              <MiniWindow>{m.view}<MiniBadge>{m.badge}</MiniBadge></MiniWindow>
            </DockCell>
          ))}
          <TallCell><TrashIcon /></TallCell>
        </Dock>
      </DockArea>
    </Desktop>
  );
}
